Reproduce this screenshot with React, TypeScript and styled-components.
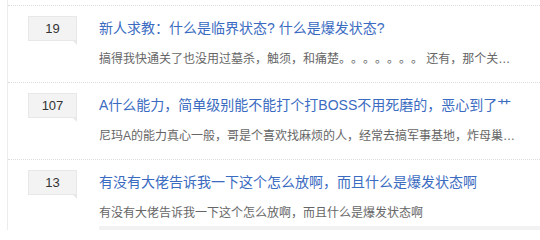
import React from 'react';
import styled, { createGlobalStyle } from 'styled-components';

type Topic = {
  id: number;
  replies: number;
  title: string;
  summary: string;
  quote?: boolean;
};

const topics: Topic[] = [
  {
    id: 1,
    replies: 19,
    title: '新人求教：什么是临界状态? 什么是爆发状态?',
    summary: '搞得我快通关了也没用过墓杀，触须，和痛楚。。。。。。。 还有，那个关…',
  },
  {
    id: 2,
    replies: 107,
    title: 'A什么能力，简单级别能不能打个打BOSS不用死磨的，恶心到了艹',
    summary: '尼玛A的能力真心一般，哥是个喜欢找麻烦的人，经常去搞军事基地，炸母巢…',
  },
  {
    id: 3,
    replies: 13,
    title: '有没有大佬告诉我一下这个怎么放啊，而且什么是爆发状态啊',
    summary: '有没有大佬告诉我一下这个怎么放啊，而且什么是爆发状态啊',
    quote: true,
  },
];

const App: React.FC = () => {
  return (
    <>
      <GlobalStyle />
      <TopicList>
        {topics.map((t) => (
          <TopicRow key={t.id}>
            <ReplyCount>{t.replies}</ReplyCount>
            <TopicBody>
              <TopicTitle href="#">{t.title}</TopicTitle>
              <TopicSummary>{t.summary}</TopicSummary>
              {t.quote ? <QuoteBlock /> : null}
            </TopicBody>
          </TopicRow>
        ))}
      </TopicList>
    </>
  );
};

const GlobalStyle = createGlobalStyle`
  html, body {
    margin: 0;
    padding: 0;
    background: #fff;
    overflow: hidden;
  }
  body {
    font-family: "Liberation Sans", "Noto Sans CJK SC", sans-serif;
    text-spacing-trim: space-all;
  }
`;

const TopicList = styled.div`
  margin-left: 7px;
  padding-top: 5px;
  border-left: 1px solid #ececec;
  height: 230px;
  box-sizing: border-box;
  overflow: hidden;
`;

const TopicRow = styled.div`
  display: flex;
  align-items: flex-start;
  gap: 22px;
  padding: 10px 0 13px 20px;
  border-top: 1px dotted #dcdcdc;
`;

const ReplyCount = styled.div`
  position: relative;
  flex: none;
  width: 47px;
  height: 23px;
  line-height: 23px;
  text-align: center;
  font-size: 13px;
  color: #333;
  background: #f3f3f3;
  border: 1px solid #e8e8e8;

  &::after {
    content: '';
    position: absolute;
    right: -1px;
    bottom: -5px;
    width: 0;
    height: 0;
    border-style: solid;
    border-width: 0 5px 5px 0;
    border-color: transparent #e8e8e8 transparent transparent;
  }
`;

const TopicBody = styled.div`
  flex: 1;
  min-width: 0;
  padding-top: 2px;
`;

const TopicTitle = styled.a`
  display: block;
  font-size: 14px;
  line-height: 20px;
  color: #3a6bc1;
  text-decoration: none;
  white-space: nowrap;
`;

const TopicSummary = styled.div`
  margin-top: 11px;
  font-size: 12px;
  line-height: 20px;
  color: #666;
  white-space: nowrap;
`;

const QuoteBlock = styled.div`
  margin-top: 3px;
  height: 20px;
  background: #f2f2f2;
`;

export default App;
